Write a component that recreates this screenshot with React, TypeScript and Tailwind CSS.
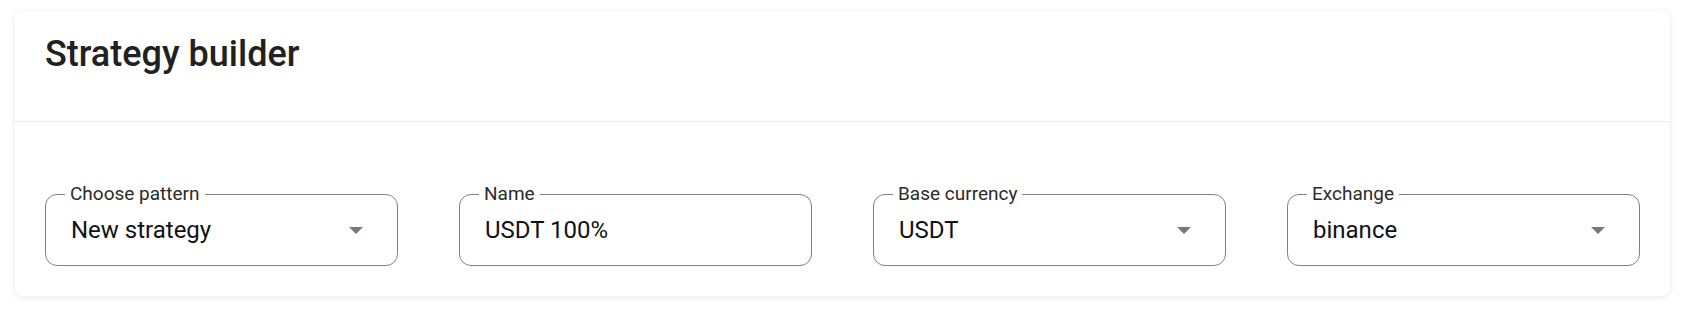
import React from "react";

function Caret() {
  return (
    <svg width="14" height="7" viewBox="0 0 14 7" className="mr-[14px] shrink-0">
      <polygon points="0,0 14,0 7,7" fill="#737987" />
    </svg>
  );
}

function Field({ label, value, select }: { label: string; value: string; select?: boolean }) {
  return (
    <fieldset className="m-0 min-w-0 rounded-[12px] border border-[#7d818d] pl-[19px] pr-[20px] pt-[11px] pb-[21px]">
      <legend className="px-[5px] text-[19px] leading-[22px] text-[#2b2b2b]">{label}</legend>
      <div className="flex items-center justify-between pl-[6px]">
        <span className="text-[24px] leading-[28px] text-[#111111]">{value}</span>
        {select && <Caret />}
      </div>
    </fieldset>
  );
}

export default function App() {
  return (
    <div className="min-h-[315px] bg-white px-[15px] pt-[11px] pb-[19px]" style={{ fontFamily: "Roboto, 'Noto Sans', sans-serif" }}>
      <div className="rounded-[8px] bg-white shadow-[0_1px_6px_rgba(0,0,0,0.10)]">
        <div className="border-b border-[#ececec] px-[30px] pt-[22px] pb-[46px]">
          <h1 className="text-[36px] font-medium leading-[42px] text-[#212121]">Strategy builder</h1>
        </div>
        <div className="grid grid-cols-4 gap-[61px] px-[30px] pt-[61px] pb-[30px]">
          <Field label="Choose pattern" value="New strategy" select />
          <Field label="Name" value="USDT 100%" />
          <Field label="Base currency" value="USDT" select />
          <Field label="Exchange" value="binance" select />
        </div>
      </div>
    </div>
  );
}
